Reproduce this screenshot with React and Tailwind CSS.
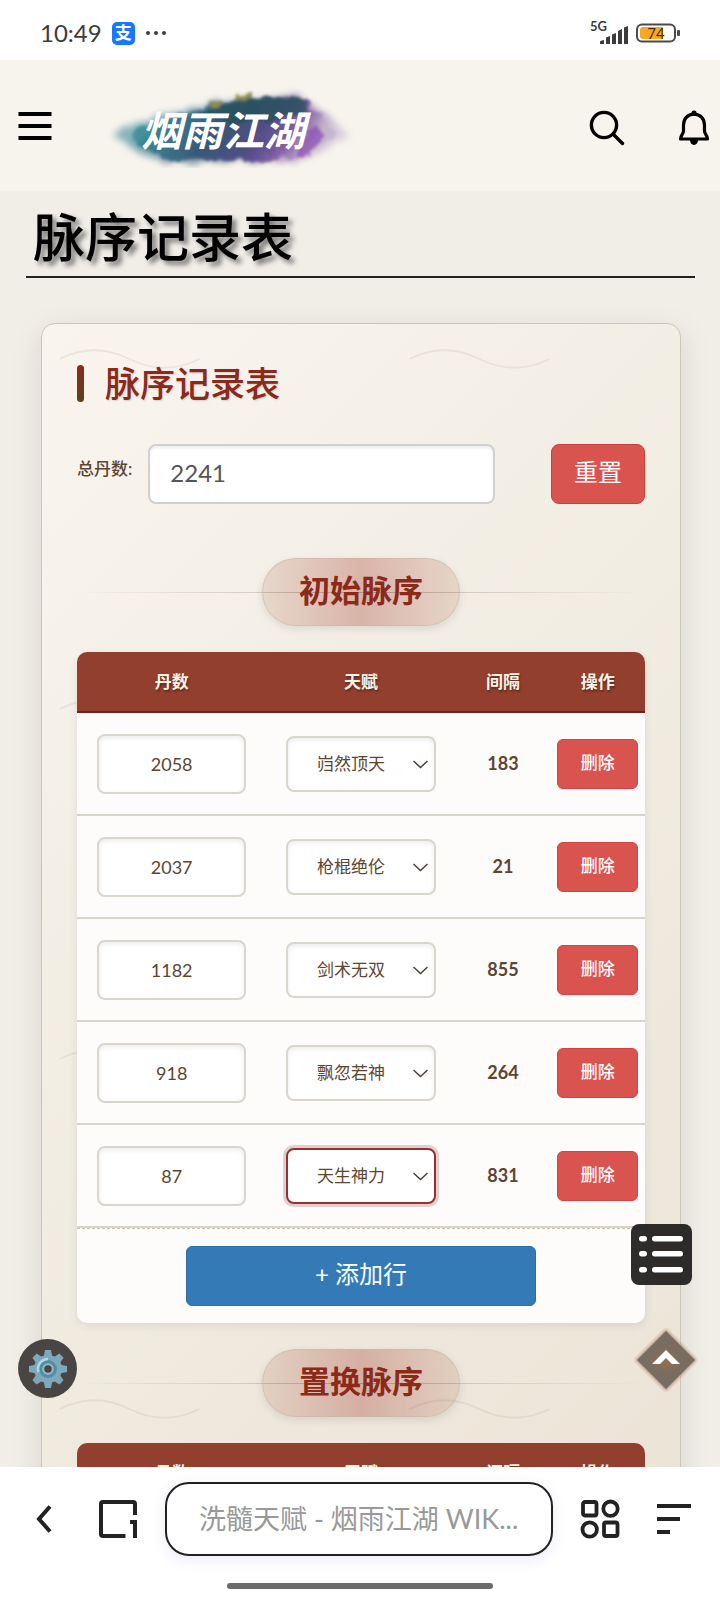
import React, { useState } from 'react';

const talents = ['岿然顶天', '枪棍绝伦', '剑术无双', '飘忽若神', '天生神力'];

const initialRows = [
  { id: 1, count: 2058, talent: '岿然顶天' },
  { id: 2, count: 2037, talent: '枪棍绝伦' },
  { id: 3, count: 1182, talent: '剑术无双' },
  { id: 4, count: 918, talent: '飘忽若神' },
  { id: 5, count: 87, talent: '天生神力' },
];

function StatusBar() {
  return (
    <div className="flex h-[60px] shrink-0 items-center bg-white pl-10 pr-10 pt-1.5 text-[#3c3c3c]">
      <span className="text-[24px] leading-[28px]">10:49</span>
      <span className="ml-2.5 flex h-[23px] w-[23px] items-center justify-center rounded-[5px] bg-[#1677ff] text-[17px] font-bold leading-[22px] text-white">
        支
      </span>
      <svg className="ml-2.5" width="22" height="6" viewBox="0 0 22 6" fill="#3c3c3c">
        <circle cx="3" cy="3" r="2" />
        <circle cx="11" cy="3" r="2" />
        <circle cx="19" cy="3" r="2" />
      </svg>
      <div className="ml-auto flex items-center gap-2">
        <div className="relative h-[22px] w-[38px]">
          <span className="absolute -top-0.5 left-0 text-[13px] font-bold leading-[13px]">5G</span>
          <svg className="absolute bottom-0 right-0" width="28" height="19" viewBox="0 0 28 19" fill="#3c3c3c">
            <path d="M0 19v-2q0 -1 1 -1.300l3 -0.700v4zM6 19v-6.500l4-1.500v8zM12 19V9.500l4-1.500v11zM18 19V6l4-2v15zM24 19V2.500l4-1.500v18z" />
          </svg>
        </div>
        <div className="relative h-5 w-11">
          <svg width="44" height="20" viewBox="0 0 44 20" fill="none">
            <rect x="1" y="1.500" width="38" height="17" rx="5" stroke="#4a4a4a" strokeWidth="2" />
            <path d="M7 4h20v12H7a3 3 0 0 1-3-3V7a3 3 0 0 1 3-3z" fill="#f9a825" />
            <rect x="41" y="7" width="3" height="6" rx="1" fill="#4a4a4a" />
          </svg>
          <span className="absolute inset-0 pr-1 text-center text-[15px] leading-5 text-[#4a2c10]">74</span>
        </div>
      </div>
    </div>
  );
}

function Logo() {
  return (
    <svg width="250" height="84" viewBox="0 0 250 84" role="img" aria-label="烟雨江湖">
      <defs>
        <linearGradient id="ink" x1="0" x2="1" y1="0" y2="0.2">
          <stop offset="0" stopColor="#6fb0b4" />
          <stop offset="0.22" stopColor="#2c7f90" />
          <stop offset="0.5" stopColor="#2d4f70" />
          <stop offset="0.72" stopColor="#45437f" />
          <stop offset="0.87" stopColor="#8055a5" />
          <stop offset="1" stopColor="#c3b3cc" />
        </linearGradient>
        <filter id="rough" x="-10%" y="-20%" width="120%" height="140%">
          <feTurbulence type="fractalNoise" baseFrequency="0.07" numOctaves="3" seed="4" result="n" />
          <feDisplacementMap in="SourceGraphic" in2="n" scale="12" xChannelSelector="R" yChannelSelector="G" />
          <feGaussianBlur stdDeviation="1.8" />
        </filter>
        <filter id="haze" x="-20%" y="-40%" width="140%" height="180%">
          <feTurbulence type="fractalNoise" baseFrequency="0.06" numOctaves="2" seed="9" result="n" />
          <feDisplacementMap in="SourceGraphic" in2="n" scale="16" xChannelSelector="R" yChannelSelector="G" />
          <feGaussianBlur stdDeviation="3.5" />
        </filter>
      </defs>
      <g filter="url(#haze)" opacity="0.6">
        <path d="M6 50 Q56 26 116 19 L190 13 Q225 30 246 50 Q225 70 190 78 H60 Q30 72 6 50z" fill="url(#ink)" />
      </g>
      <g filter="url(#rough)">
        <path d="M24 52 Q50 34 95 26 L128 15 L194 12 Q216 28 230 48 Q220 68 190 74 Q120 80 70 75 Q40 68 24 52z" fill="url(#ink)" opacity="0.85" />
        <path d="M92 30 L130 15 L194 12 L208 28 Q160 42 112 38z" fill="#24525a" opacity="0.75" />
        <path d="M104 20 l12 -3 l1 5 l-12 2zM133 12l12 -1v4l-12 1z" fill="#8d8b50" />
        <path d="M200 46 Q214 38 220 50 Q212 72 192 74z" fill="#8e50b4" opacity="0.75" />
      </g>
      <text
        x="36"
        y="62"
        fill="#fff"
        fontSize="41"
        fontWeight="700"
        fontStyle="italic"
        fontFamily="'Noto Sans CJK SC', sans-serif"
      >
        烟雨江湖
      </text>
    </svg>
  );
}

function Header() {
  return (
    <header className="flex h-[131px] shrink-0 items-center bg-[#f7f4ed] pl-[18px] pr-2.5">
      <button aria-label="菜单" className="cursor-pointer">
        <svg width="34" height="30" viewBox="0 0 34 30" fill="#000">
          <rect x="0.500" y="1" width="33" height="4" />
          <rect x="0.500" y="13" width="33" height="4" />
          <rect x="0.500" y="25" width="33" height="4" />
        </svg>
      </button>
      <a href="#home" className="ml-[53px] block">
        <Logo />
      </a>
      <button aria-label="搜索" className="ml-auto cursor-pointer pt-1">
        <svg width="36" height="36" viewBox="0 0 36 36" fill="none" stroke="#000" strokeWidth="3.400" strokeLinecap="round">
          <circle cx="15" cy="15" r="12.600" />
          <path d="M24.500 24.500 L33.500 33.500" />
        </svg>
      </button>
      <button aria-label="通知" className="ml-[53px] cursor-pointer pt-1">
        <svg width="32" height="36" viewBox="0 0 32 36" fill="none" stroke="#000" strokeWidth="3.200" strokeLinejoin="round">
          <path d="M16 4.200 C9.500 4.200 5.500 9 5.500 15 V21 C5.500 24 2.500 25.500 2.500 29 H29.500 C29.500 25.500 26.500 24 26.500 21 V15 C26.500 9 22.500 4.200 16 4.200z" />
          <circle cx="16" cy="3" r="2.600" fill="#000" stroke="none" />
          <path d="M12 30 h8 a4 5 0 0 1 -8 0z" fill="#000" stroke="none" />
        </svg>
      </button>
    </header>
  );
}

function Waves() {
  return (
    <svg className="pointer-events-none absolute inset-0 h-full w-full" aria-hidden="true">
      <defs>
        <pattern id="waves" width="350" height="350" patternUnits="userSpaceOnUse">
          <path d="M17.500 35 Q52.500 17.500 87.500 35 T157.500 35" fill="none" stroke="#8b7d6b" strokeOpacity="0.120" strokeWidth="1.750" />
        </pattern>
      </defs>
      <rect width="100%" height="100%" fill="url(#waves)" />
    </svg>
  );
}

function SectionTitle({ children }) {
  return (
    <div className="relative flex justify-center">
      <div className="absolute inset-x-0 top-[34px] h-px bg-linear-to-r from-transparent via-[#a89f90] to-transparent opacity-70" />
      <h3 className="relative rounded-full border border-[#c4b8a880] bg-linear-to-r from-[#8b25001f] via-[#9b2c1c4d] to-[#8b25001f] px-9 pb-1 text-[31px] font-bold leading-[62px] text-[#8b2a1b] shadow-[0_3px_8px_rgba(0,0,0,0.1)]">
        {children}
      </h3>
    </div>
  );
}

function TableHead() {
  return (
    <>
      <colgroup>
        <col className="w-1/3" />
        <col className="w-1/3" />
        <col className="w-1/6" />
        <col className="w-1/6" />
      </colgroup>
      <thead>
        <tr className="bg-[#933f2e] text-[#fbf3e6] [text-shadow:1px_2px_2px_rgba(0,0,0,0.35)]">
          {['丹数', '天赋', '间隔', '操作'].map((name) => (
            <th key={name} className="h-[61px] border-b-2 border-[#6f2318] p-0 text-center text-[17px] font-bold">
              {name}
            </th>
          ))}
        </tr>
      </thead>
    </>
  );
}

function TalentRow({ row, gap, active, onChange, onDelete, onFocus }) {
  return (
    <tr>
      <td className="h-[103px] border-b-2 border-[#d9d4ca] px-5">
        <input
          aria-label="丹数"
          value={row.count}
          onChange={(e) => onChange({ count: Number(e.target.value) || 0 })}
          className="h-[60px] w-full rounded-lg border-2 border-[#d9d6ce] bg-white text-center text-[18px] text-[#5c4632] shadow-[inset_0_2px_5px_rgba(0,0,0,0.08)] outline-none"
        />
      </td>
      <td className="h-[103px] border-b-2 border-[#d9d4ca] px-5">
        <div className="relative">
          <select
            aria-label="天赋"
            value={row.talent}
            onFocus={onFocus}
            onChange={(e) => onChange({ talent: e.target.value })}
            className={`h-14 w-full appearance-none rounded-lg border-2 bg-white pr-5 text-center text-[17px] text-[#5c4632] outline-none [text-align-last:center]
              ${active ? 'border-[#933232] shadow-[0_0_0_3px_rgba(147,50,50,0.22)]' : 'border-[#d9d6ce] shadow-[inset_0_2px_5px_rgba(0,0,0,0.08)]'}`}
          >
            {talents.map((talent) => (
              <option key={talent}>{talent}</option>
            ))}
          </select>
          <svg className="pointer-events-none absolute right-2 top-6" width="15" height="9" viewBox="0 0 15 9" fill="none" stroke="#4a4038" strokeWidth="1.500">
            <path d="M0.500 1 L7.500 7.500 L14.500 1" />
          </svg>
        </div>
      </td>
      <td className="h-[103px] border-b-2 border-[#d9d4ca] p-0 text-center text-[18px] font-bold text-[#5c4632]">{gap}</td>
      <td className="h-[103px] border-b-2 border-[#d9d4ca] px-[7px]">
        <button
          onClick={onDelete}
          className="block h-[50px] w-full cursor-pointer rounded-md border border-[#d0453f] bg-[#d9534f] pb-0.5 text-[17px] font-medium text-white"
        >
          删除
        </button>
      </td>
    </tr>
  );
}

function BottomBar() {
  return (
    <nav className="shrink-0 bg-white">
      <div className="flex h-[104px] items-center pl-[34px] pr-7">
        <button aria-label="返回" className="cursor-pointer">
          <svg width="20" height="28" viewBox="0 0 20 28" fill="none" stroke="#222" strokeWidth="4">
            <path d="M16 1.500 L5 14 L16 26.500" />
          </svg>
        </button>
        <button aria-label="标签页" className="ml-11 cursor-pointer">
          <svg width="40" height="40" viewBox="0 0 40 40" fill="none" stroke="#222" strokeWidth="4">
            <path d="M37 16 V5 a2 2 0 0 0 -2 -2 H5 a2 2 0 0 0 -2 2 V35 a2 2 0 0 0 2 2 H27.500" />
            <path d="M32 23 H37 V39" />
          </svg>
        </button>
        <button className="ml-[27px] h-[74px] min-w-0 flex-1 cursor-pointer truncate rounded-[24px] border-2 border-[#222] bg-white px-7 pl-8 text-left text-[27px] text-[#999] shadow-[0_4px_14px_rgba(80,90,200,0.12)]">
          洗髓天赋 - 烟雨江湖 WIK...
        </button>
        <button aria-label="应用" className="ml-[27px] cursor-pointer">
          <svg width="40" height="40" viewBox="0 0 40 40" fill="none" stroke="#222" strokeWidth="3.800">
            <rect x="3" y="3" width="13.500" height="13.500" rx="2" />
            <circle cx="30.500" cy="9.700" r="7.200" />
            <circle cx="9.700" cy="30.500" r="7.200" />
            <rect x="24" y="23.500" width="13.500" height="13.500" rx="2" />
          </svg>
        </button>
        <button aria-label="更多" className="ml-9 cursor-pointer">
          <svg width="36" height="32" viewBox="0 0 36 32" fill="#222">
            <rect x="1" y="1" width="34" height="4" />
            <rect x="1" y="14" width="23" height="4" />
            <rect x="1" y="27" width="13" height="4" />
          </svg>
        </button>
      </div>
      <div className="flex justify-center pb-[11px] pt-3">
        <div className="h-1.5 w-[266px] rounded-full bg-[#6b6b6b]" />
      </div>
    </nav>
  );
}

function FloatingButtons() {
  return (
    <>
      <button aria-label="设置" className="fixed bottom-[202px] left-[18px] flex h-[59px] w-[59px] cursor-pointer items-center justify-center rounded-full bg-[#484542]">
        <svg width="40" height="40" viewBox="0 0 40 40">
          <g fill="#7fa9bb">
            {[0, 45, 90, 135].map((angle) => (
              <path key={angle} d="M17 1 h6 l1.500 8 v22 l-1.500 8 h-6 l-1.500 -8 v-22z" transform={`rotate(${angle} 20 20)`} />
            ))}
            <circle cx="20" cy="20" r="14" />
          </g>
          <circle cx="20" cy="20" r="7.500" fill="none" stroke="#4f8fa5" strokeWidth="3" />
          <path d="M10.500 23 A10 10 0 0 1 20 10" fill="none" stroke="#a9dbe4" strokeWidth="2.500" />
          <circle cx="20" cy="20" r="4.500" fill="#484542" stroke="#9ab9c4" strokeWidth="1.500" />
        </svg>
      </button>
      <div className="fixed bottom-[208px] right-[22px] flex flex-col items-end gap-[43px]">
        <button aria-label="目录" className="mr-1.5 flex h-[61px] w-[61px] cursor-pointer items-center justify-center rounded-lg bg-[#1c1a19ea]">
          <svg width="45" height="37" viewBox="0 0 45 37" fill="#fff">
            {[0, 15, 31].map((y) => (
              <g key={y}>
                <rect x="0" y={y} width="8" height="5.500" rx="2.700" />
                <rect x="13" y={y} width="31" height="5.500" rx="2.700" />
              </g>
            ))}
          </svg>
        </button>
        <button aria-label="回到顶部" className="cursor-pointer">
          <svg width="64" height="64" viewBox="0 0 64 64">
            <defs>
              <radialGradient id="glow">
                <stop offset="0" stopColor="#9a7048" />
                <stop offset="0.400" stopColor="#7d6c5f" />
                <stop offset="1" stopColor="#736d66" />
              </radialGradient>
              <filter id="soft">
                <feGaussianBlur stdDeviation="1.500" />
              </filter>
            </defs>
            <path d="M32 1 L63 32 L32 63 L1 32z" fill="#b5866f" opacity="0.800" filter="url(#soft)" />
            <path d="M32 3 L61 32 L32 61 L3 32z" fill="url(#glow)" />
            <path d="M18 36 L32 22 L46 36 H38 L32 30 L26 36z" fill="#fff" />
          </svg>
        </button>
      </div>
    </>
  );
}

export default function App() {
  const [total, setTotal] = useState('2241');
  const [rows, setRows] = useState(initialRows);
  const [activeId, setActiveId] = useState(5);

  const updateRow = (id, patch) => {
    setRows((prev) => prev.map((row) => (row.id === id ? { ...row, ...patch } : row)));
  };

  const addRow = () => {
    setRows((prev) => [...prev, { id: Date.now(), count: 0, talent: talents[0] }]);
  };

  // each gap is measured from the row above, the first one from the total
  const gapOf = (i) => (i === 0 ? Number(total) : rows[i - 1].count) - rows[i].count;

  return (
    <div className="flex h-screen flex-col bg-[#f1eee8] font-[Lato,'Noto_Sans_CJK_SC',sans-serif]">
      <StatusBar />
      <Header />

      <main className="min-h-0 flex-1 overflow-y-auto [scrollbar-width:none]">
        <h1 className="ml-[26px] mr-[25px] border-b-2 border-[#222] px-[7px] pb-[3px] pt-2.5 text-[52px] font-medium leading-[72px] text-black [text-shadow:4px_4px_5px_rgba(0,0,0,0.5)]">
          脉序记录表
        </h1>

        <section className="relative ml-[41px] mr-[39px] mt-[45px] rounded-[14px] border border-[#cdc6b6] bg-linear-135 from-[#f9f4ee] via-[#f1ece1] to-[#ebe3d6] px-[35px] pb-10 pt-[41px] shadow-[0_8px_32px_rgba(0,0,0,0.1)]">
          <Waves />
          <div className="relative">
            <h2 className="flex items-center gap-[21px] text-[35px] font-medium leading-[37px] text-[#8b2a1b] [text-shadow:1px_1px_2px_rgba(0,0,0,0.15)]">
              <span className="h-[37px] w-[7px] rounded-full bg-linear-to-b from-[#8b2a1b] to-[#5c4020]" />
              脉序记录表
            </h2>

            <div className="mt-[42px] flex items-center">
              <label htmlFor="total" className="pb-2.5 text-[17px] font-medium leading-5 text-[#5c4632]">
                总丹数:
              </label>
              <input
                id="total"
                value={total}
                onChange={(e) => setTotal(e.target.value)}
                className="ml-4 h-[60px] min-w-0 flex-1 rounded-lg border-2 border-[#d2d0ce] bg-white px-5 pb-1 text-[24px] text-[#555] shadow-[inset_0_2px_3px_rgba(0,0,0,0.08)] outline-none"
              />
              <button
                onClick={() => setRows(initialRows)}
                className="ml-14 h-[60px] w-[94px] cursor-pointer rounded-lg border border-[#c9403b] bg-[#d9534f] pb-1 text-[24px] text-white"
              >
                重置
              </button>
            </div>

            <div className="mt-[54px]">
              <SectionTitle>初始脉序</SectionTitle>
            </div>

            <div className="mt-[26px] overflow-hidden rounded-[10px] bg-[#fdfcfa] shadow-[0_3px_10px_rgba(0,0,0,0.08)]">
              <table className="w-full table-fixed border-separate border-spacing-0">
                <TableHead />
                <tbody>
                  {rows.map((row, i) => (
                    <TalentRow
                      key={row.id}
                      row={row}
                      gap={gapOf(i)}
                      active={row.id === activeId}
                      onFocus={() => setActiveId(row.id)}
                      onChange={(patch) => updateRow(row.id, patch)}
                      onDelete={() => setRows((prev) => prev.filter((r) => r.id !== row.id))}
                    />
                  ))}
                </tbody>
              </table>
              <div className="flex justify-center border-t border-dashed border-[#c9c0b0] py-[17px]">
                <button
                  onClick={addRow}
                  className="h-[60px] w-[350px] cursor-pointer rounded-md border border-[#2e6da4] bg-[#337ab7] pb-1 text-[24px] text-white"
                >
                  + 添加行
                </button>
              </div>
            </div>

            <div className="mt-[26px]">
              <SectionTitle>置换脉序</SectionTitle>
            </div>

            <div className="mt-[26px] overflow-hidden rounded-[10px] bg-[#fdfcfa]">
              <table className="w-full table-fixed border-separate border-spacing-0">
                <TableHead />
              </table>
            </div>
          </div>
        </section>
      </main>

      <BottomBar />
      <FloatingButtons />
    </div>
  );
}
